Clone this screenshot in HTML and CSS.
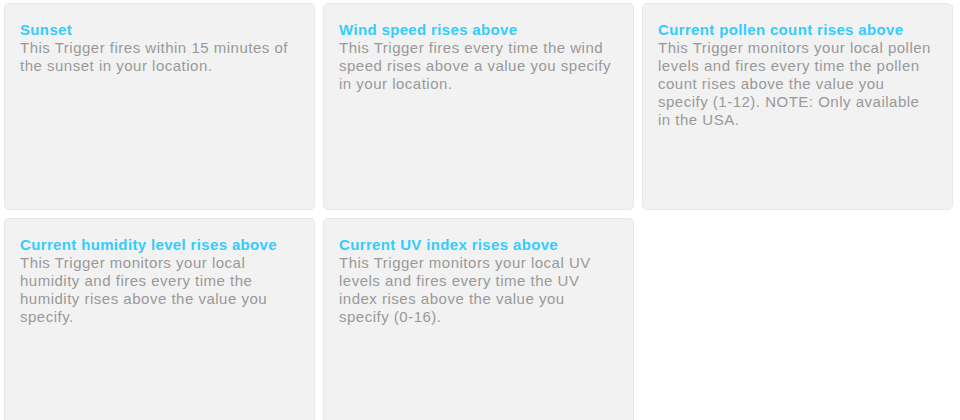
FILE: index.html
```html
<!DOCTYPE html>
<html>
<head>
<meta charset="utf-8">
<link rel="stylesheet" href="styles.css">
</head>
<body>
<div class="grid">
  <div class="card">
    <div class="title">Sunset</div>
    <div class="desc">This Trigger fires within 15 minutes of the sunset in your location.</div>
  </div>
  <div class="card">
    <div class="title">Wind speed rises above</div>
    <div class="desc">This Trigger fires every time the wind speed rises above a value you specify in your location.</div>
  </div>
  <div class="card">
    <div class="title">Current pollen count rises above</div>
    <div class="desc">This Trigger monitors your local pollen levels and fires every time the pollen count rises above the value you specify (1-12). NOTE: Only available in the USA.</div>
  </div>
  <div class="card">
    <div class="title">Current humidity level rises above</div>
    <div class="desc">This Trigger monitors your local humidity and fires every time the humidity rises above the value you specify.</div>
  </div>
  <div class="card">
    <div class="title">Current UV index rises above</div>
    <div class="desc">This Trigger monitors your local UV levels and fires every time the UV index rises above the value you specify (0-16).</div>
  </div>
</div>
</body>
</html>
```

FILE: styles.css
```css
html, body {
  margin: 0;
  background: #ffffff;
}
body {
  font-family: "Liberation Sans", Arial, Helvetica, sans-serif;
  font-size: 15px;
  line-height: 18px;
}
.grid {
  display: grid;
  grid-template-columns: repeat(3, 311px);
  grid-auto-rows: 207px;
  gap: 8px;
  padding: 3px 4px;
}
.card {
  box-sizing: border-box;
  background: #f2f2f2;
  border: 1px solid #e8e8e8;
  border-radius: 5px;
  padding: 17px 16px 16px 15px;
}
.title {
  color: #33ccff;
  font-weight: bold;
  letter-spacing: 0.35px;
}
.desc {
  color: #999999;
  letter-spacing: 0.5px;
}
```
